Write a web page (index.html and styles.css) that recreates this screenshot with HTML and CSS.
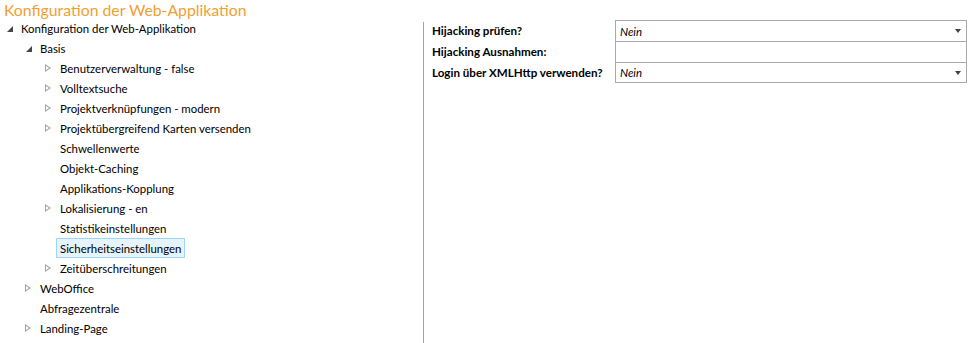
FILE: index.html
```html
<!DOCTYPE html>
<html lang="de">
<head>
    <meta charset="UTF-8">
    <title>Konfiguration der Web-Applikation</title>
    <link rel="stylesheet" href="styles.css">
</head>
<body>
    <h1 class="page-title">Konfiguration der Web-Applikation</h1>

    <div class="layout">
        <!-- Tree of configuration sections -->
        <ul class="tree">
            <li class="node depth-1"><span class="toggle open"></span><span class="label">Konfiguration der Web-Applikation</span></li>
            <li class="node depth-2"><span class="toggle open"></span><span class="label">Basis</span></li>
            <li class="node depth-3"><span class="toggle closed"></span><span class="label">Benutzerverwaltung - false</span></li>
            <li class="node depth-3"><span class="toggle closed"></span><span class="label">Volltextsuche</span></li>
            <li class="node depth-3"><span class="toggle closed"></span><span class="label">Projektverknüpfungen - modern</span></li>
            <li class="node depth-3"><span class="toggle closed"></span><span class="label">Projektübergreifend Karten versenden</span></li>
            <li class="node depth-3"><span class="toggle"></span><span class="label">Schwellenwerte</span></li>
            <li class="node depth-3"><span class="toggle"></span><span class="label">Objekt-Caching</span></li>
            <li class="node depth-3"><span class="toggle"></span><span class="label">Applikations-Kopplung</span></li>
            <li class="node depth-3"><span class="toggle closed"></span><span class="label">Lokalisierung - en</span></li>
            <li class="node depth-3"><span class="toggle"></span><span class="label">Statistikeinstellungen</span></li>
            <li class="node depth-3"><span class="toggle"></span><span class="label selected">Sicherheitseinstellungen</span></li>
            <li class="node depth-3"><span class="toggle closed"></span><span class="label">Zeitüberschreitungen</span></li>
            <li class="node depth-2"><span class="toggle closed"></span><span class="label">WebOffice</span></li>
            <li class="node depth-2"><span class="toggle"></span><span class="label">Abfragezentrale</span></li>
            <li class="node depth-2"><span class="toggle closed"></span><span class="label">Landing-Page</span></li>
        </ul>

        <!-- Settings of the selected section -->
        <div class="settings">
            <div class="settings-grid">
                <label class="setting-label">Hijacking prüfen?</label>
                <div class="field select"><span class="value">Nein</span><span class="caret"></span></div>

                <label class="setting-label">Hijacking Ausnahmen:</label>
                <div class="field"></div>

                <label class="setting-label">Login über XMLHttp verwenden?</label>
                <div class="field select"><span class="value">Nein</span><span class="caret"></span></div>
            </div>
        </div>
    </div>
</body>
</html>
```

FILE: styles.css
```css
body {
    margin: 0;
    font-family: Lato, "Open Sans", sans-serif;
    font-size: 11.4px;
    color: #000;
    background-color: #fff;
    overflow: hidden;
}

.page-title {
    margin: 0;
    padding: 0 0 0 4px;
    height: 18px;
    line-height: 19px;
    font-size: 15.8px;
    font-weight: normal;
    color: #f0a033;
}

.layout {
    display: flex;
    height: 325px;
}

/* Tree styles */
.tree {
    list-style: none;
    margin: 0;
    padding: 0;
    width: 423px;
    flex-shrink: 0;
}

.node {
    display: flex;
    align-items: center;
    height: 20px;
}

.depth-1 { padding-left: 3px; }
.depth-2 { padding-left: 22px; }
.depth-3 { padding-left: 42px; }

.toggle {
    width: 14px;
    height: 20px;
    position: relative;
    flex-shrink: 0;
}

.toggle.open::after {
    content: "";
    position: absolute;
    left: 4px;
    top: 8px;
    border-style: solid;
    border-width: 0 0 6px 6px;
    border-color: transparent transparent #454545 transparent;
}

.toggle.closed::before {
    content: "";
    position: absolute;
    left: 3px;
    top: 6px;
    border-style: solid;
    border-width: 4.5px 0 4.5px 6px;
    border-color: transparent transparent transparent #a6a6a6;
}

.toggle.closed::after {
    content: "";
    position: absolute;
    left: 4px;
    top: 8px;
    border-style: solid;
    border-width: 2.5px 0 2.5px 3.5px;
    border-color: transparent transparent transparent #fff;
}

.label {
    height: 18px;
    line-height: 19px;
    padding: 0 3px;
    border: 1px solid transparent;
    white-space: nowrap;
}

.label.selected {
    background-color: #e5f3fb;
    border-color: #9fd5fd;
}

/* Settings panel */
.settings {
    flex: 1;
    border-left: 1px solid #a0a0a0;
    margin-top: 4px;
    padding-left: 8px;
}

.settings-grid {
    display: grid;
    grid-template-columns: 183px 352px;
    grid-auto-rows: 21px;
    margin-top: -2px;
}

.setting-label {
    line-height: 21px;
    font-size: 11.6px;
    font-weight: bold;
    white-space: nowrap;
}

.field {
    border: 1px solid #a9a9a9;
    border-bottom: none;
    display: flex;
    align-items: center;
    padding: 0 4px;
}

.field:last-child {
    border-bottom: 1px solid #a9a9a9;
}

.value {
    flex: 1;
    font-style: italic;
    font-size: 11.4px;
}

.caret {
    width: 0;
    height: 0;
    border-style: solid;
    border-width: 4px 3px 0 3px;
    border-color: #444 transparent transparent transparent;
    margin-right: 1px;
}
```
